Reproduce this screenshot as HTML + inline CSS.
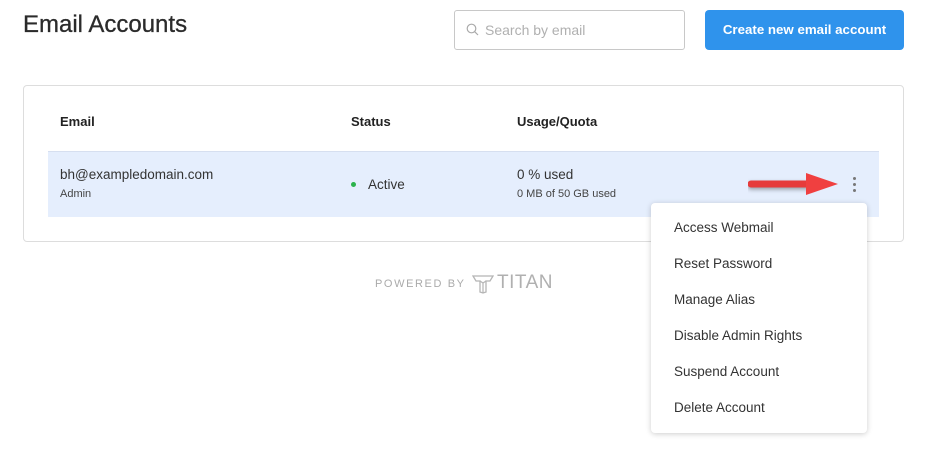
<!DOCTYPE html>
<html><head><style>
body{margin:0;width:928px;height:465px;background:#fff;font-family:"Liberation Sans",sans-serif;position:relative;overflow:hidden;color:#333}
.a{position:absolute}
</style></head><body>
<div class="a" style="left:23px;top:11px;font-size:24px;color:#2b2b2b;-webkit-text-stroke:0.3px #2b2b2b">Email Accounts</div>
<div class="a" style="left:454px;top:10px;width:229px;height:38px;border:1px solid #c8c8c8;border-radius:3px"></div>
<svg class="a" style="left:466px;top:23px" width="13" height="13" viewBox="0 0 13 13"><circle cx="5.5" cy="5.5" r="4.3" fill="none" stroke="#aaa" stroke-width="1.2"/><path d="M8.7 8.7L12 12" stroke="#aaa" stroke-width="1.2"/></svg>
<div class="a" style="left:485px;top:22px;font-size:14px;color:#b0b0b0">Search by email</div>
<div class="a" style="left:705px;top:10px;width:199px;height:40px;background:#2f93ec;border-radius:4px;color:#fff;font-weight:bold;font-size:13.3px;line-height:40px;text-align:center">Create new email account</div>
<div class="a" style="left:23px;top:85px;width:879px;height:155px;border:1px solid #ddd;border-radius:4px"></div>
<div class="a" style="left:60px;top:114px;font-size:13px;font-weight:bold;color:#222">Email</div>
<div class="a" style="left:351px;top:114px;font-size:13px;font-weight:bold;color:#222">Status</div>
<div class="a" style="left:517px;top:114px;font-size:13px;font-weight:bold;color:#222">Usage/Quota</div>
<div class="a" style="left:48px;top:151px;width:831px;height:65px;background:#e5eefd;border-top:1px solid #d6dff0"></div>
<div class="a" style="left:60px;top:167px;font-size:13.5px;color:#333">bh@exampledomain.com</div>
<div class="a" style="left:60px;top:188px;font-size:11px;color:#444">Admin</div>
<div class="a" style="left:351px;top:182px;width:5px;height:5px;border-radius:50%;background:#2bb24c"></div>
<div class="a" style="left:368px;top:177px;font-size:13.5px;color:#333">Active</div>
<div class="a" style="left:517px;top:167px;font-size:13.5px;color:#333">0 % used</div>
<div class="a" style="left:517px;top:188px;font-size:11px;color:#444">0 MB of 50 GB used</div>
<div class="a" style="left:853px;top:177px;width:3px;height:3px;border-radius:50%;background:#777;box-shadow:0 6px #777,0 12px #777"></div>
<svg class="a" style="left:748px;top:172px" width="100" height="24"><path d="M3 12H62" stroke="#e63b3b" stroke-width="7" stroke-linecap="round" style="filter:drop-shadow(0 2px 2px rgba(0,0,0,.35))"/><path d="M58 1L90 12L58 23Z" fill="#f04040"/></svg>
<div class="a" style="left:651px;top:203px;width:216px;height:230px;background:#fff;border-radius:4px;box-shadow:0 1px 6px rgba(0,0,0,.2)"></div>
<div class="a" style="left:674px;top:210px;font-size:13.5px;color:#333;line-height:36px">Access Webmail<br>Reset Password<br>Manage Alias<br>Disable Admin Rights<br>Suspend Account<br>Delete Account</div>
<div class="a" style="left:375px;top:278px;font-size:11px;letter-spacing:1.6px;color:#aaa">POWERED BY</div>
<svg class="a" style="left:472px;top:274px" width="22" height="20" viewBox="0 0 22 20"><path d="M1 2H21L18 7H14V18L11 19L8 18V7H4Z" fill="none" stroke="#b5b5b5" stroke-width="1.3"/><path d="M8 7L11 9L14 7M11 9V19" fill="none" stroke="#b5b5b5" stroke-width="1.2"/></svg>
<div class="a" style="left:497px;top:272px;font-size:19px;color:#b0b0b0;letter-spacing:0.5px">TITAN</div>
</body></html>
